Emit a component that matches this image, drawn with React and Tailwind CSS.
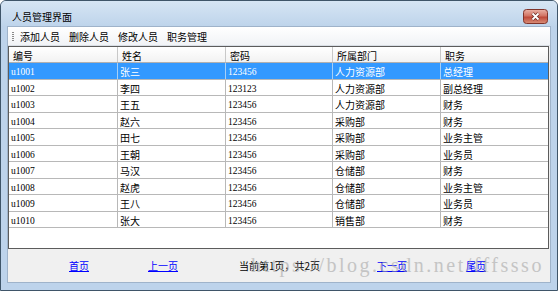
import React from 'react';

const rows = [
  ['u1001', '张三', '123456', '人力资源部', '总经理'],
  ['u1002', '李四', '123123', '人力资源部', '副总经理'],
  ['u1003', '王五', '123456', '人力资源部', '财务'],
  ['u1004', '赵六', '123456', '采购部', '财务'],
  ['u1005', '田七', '123456', '采购部', '业务主管'],
  ['u1006', '王朝', '123456', '采购部', '业务员'],
  ['u1007', '马汉', '123456', '仓储部', '财务'],
  ['u1008', '赵虎', '123456', '仓储部', '业务主管'],
  ['u1009', '王八', '123456', '仓储部', '业务员'],
  ['u1010', '张大', '123456', '销售部', '财务'],
];

const headers = ['编号', '姓名', '密码', '所属部门', '职务'];
const cols = 'grid grid-cols-[109px_108px_107px_108px_107px]';

function CloseButton() {
  return (
    <svg width="25" height="15" viewBox="0 0 25 15" className="block">
      <defs>
        <linearGradient id="closeGrad" x1="0" y1="0" x2="0" y2="1">
          <stop offset="0" stopColor="#eab2a6" />
          <stop offset="0.45" stopColor="#d27464" />
          <stop offset="0.55" stopColor="#bf4a3a" />
          <stop offset="1" stopColor="#d9907a" />
        </linearGradient>
      </defs>
      <rect x="0.5" y="0.5" width="24" height="14" rx="3" fill="url(#closeGrad)" stroke="#80342b" />
      <path d="M9.5 4.5 L15.5 10.5 M15.5 4.5 L9.5 10.5" stroke="#6a2a22" strokeWidth="3.2" />
      <path d="M9.5 4.5 L15.5 10.5 M15.5 4.5 L9.5 10.5" stroke="#ffffff" strokeWidth="1.8" />
    </svg>
  );
}

function Grip() {
  return (
    <div className="flex flex-col gap-[1px] ml-[4px]">
      {[0, 1, 2, 3, 4].map((i) => (
        <span key={i} className="block h-[1px] w-[2px] bg-[#8a8a8a]" />
      ))}
    </div>
  );
}

export default function App() {
  return (
    <div className="h-[291px] w-[558px] bg-white font-['Noto_Sans_CJK_SC',sans-serif] text-[10px] leading-[10px] text-black">
      <div className="relative flex h-[291px] w-[558px] flex-col rounded-t-[6px] border border-[#3f5569] bg-[#bdd3eb]">
        {/* title bar */}
        <div className="flex h-[25px] items-center rounded-t-[5px] bg-gradient-to-b from-[#d6e5f4] to-[#bed4eb] pl-[11px] pr-[9px] pt-[6px]">
          <span className="flex-1">人员管理界面</span>
          <CloseButton />
        </div>

        {/* client area */}
        <div className="mx-[6px] flex h-[257px] flex-col border border-[#9fb3ca] bg-[#f0f0f0]">
          {/* toolbar */}
          <div className="flex h-[19px] items-center border-b border-[#d9dee5] bg-gradient-to-b from-white to-[#f1f3f6]">
            <Grip />
            <div className="ml-[6px] flex">
              {['添加人员', '删除人员', '修改人员', '职务管理'].map((t) => (
                <span key={t} className="w-[49px] pt-[1px]">{t}</span>
              ))}
            </div>
          </div>

          {/* grid */}
          <div className="mr-[1px] h-[203px] border border-[#5c5c5c] bg-white">
            <div className={`${cols} h-[16px] border-b border-[#b0b0b0] bg-gradient-to-b from-white to-[#f2f2f2]`}>
              {headers.map((h, i) => (
                <div
                  key={h}
                  className={`flex items-center pl-[4px] pt-[3px] ${i < 4 ? 'border-r border-[#c8c8c8]' : ''}`}
                >
                  {h}
                </div>
              ))}
            </div>
            {rows.map((r, ri) => {
              const sel = ri === 0;
              return (
                <div
                  key={r[0]}
                  className={`${cols} h-[16.5px] border-b ${sel ? 'border-[#b8b8b8] bg-[#3399ff] text-white' : 'border-[#b8b8b8]'}`}
                >
                  {r.map((c, ci) => (
                    <div
                      key={ci}
                      className={`flex items-center pl-[2px] pt-[3px] ${ci < 4 ? (sel ? 'border-r border-[#a6d0f7]' : 'border-r border-[#b8b8b8]') : ''} ${ci === 0 || ci === 2 ? "font-['Liberation_Serif',serif] text-[9.5px]" : ''}`}
                    >
                      {c}
                    </div>
                  ))}
                </div>
              );
            })}
          </div>

          {/* pager */}
          <div className="relative flex flex-1 items-center pl-[61px]">
            <span className="w-[79px] text-[#0000ff] underline">首页</span>
            <span className="w-[91px] text-[#0000ff] underline">上一页</span>
            <span className="w-[138px]">当前第1页，共2页</span>
            <span className="w-[89px] text-[#0000ff] underline">下一页</span>
            <span className="text-[#0000ff] underline">尾页</span>
            <span className="pointer-events-none absolute left-[243px] top-[6px] font-['Liberation_Serif',serif] text-[20px] leading-[20px] tracking-[2.5px] text-[#a8a8a8] opacity-60">
              https://blog.csdn.net/fffssso
            </span>
          </div>
        </div>
      </div>
    </div>
  );
}
